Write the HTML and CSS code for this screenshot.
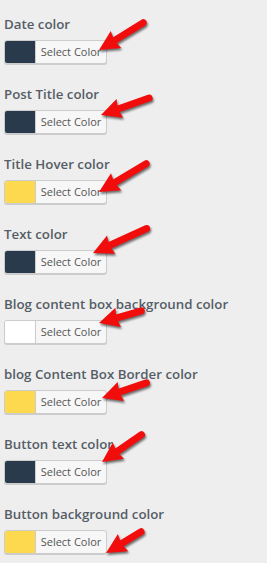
FILE: index.html
```html
<!DOCTYPE html>
<html lang="en">
<head>
    <meta charset="UTF-8">
    <meta name="viewport" content="width=device-width, initial-scale=1.0">
    <title>Colors</title>
    <link rel="stylesheet" href="styles.css">
</head>
<body>
    <ul class="settings">
        <li class="setting">
            <span class="label">Date color</span>
            <button class="picker"><span class="swatch dark"></span><span class="picker-text">Select Color</span></button>
            <svg class="arrow"><g transform="translate(95 50) rotate(-31.7)"><line x1="15" y1="0" x2="52" y2="0"/><polygon points="0,0 20,-10 18,0 20,10"/></g></svg>
        </li>
        <li class="setting">
            <span class="label">Post Title color</span>
            <button class="picker"><span class="swatch dark"></span><span class="picker-text">Select Color</span></button>
            <svg class="arrow"><g transform="translate(97 45) rotate(-19.4)"><line x1="15" y1="0" x2="51" y2="0"/><polygon points="0,0 20,-10 18,0 20,10"/></g></svg>
        </li>
        <li class="setting">
            <span class="label">Title Hover color</span>
            <button class="picker"><span class="swatch yellow"></span><span class="picker-text">Select Color</span></button>
            <svg class="arrow"><g transform="translate(95 52) rotate(-31)"><line x1="15" y1="0" x2="55" y2="0"/><polygon points="0,0 20,-10 18,0 20,10"/></g></svg>
        </li>
        <li class="setting">
            <span class="label">Text color</span>
            <button class="picker"><span class="swatch dark"></span><span class="picker-text">Select Color</span></button>
            <svg class="arrow"><g transform="translate(89 43) rotate(-24.5)"><line x1="15" y1="0" x2="59" y2="0"/><polygon points="0,0 20,-10 18,0 20,10"/></g></svg>
        </li>
        <li class="setting">
            <span class="label">Blog content box background color</span>
            <button class="picker"><span class="swatch white"></span><span class="picker-text">Select Color</span></button>
            <svg class="arrow"><g transform="translate(95 43) rotate(-16.1)"><line x1="15" y1="0" x2="44" y2="0"/><polygon points="0,0 20,-10 18,0 20,10"/></g></svg>
        </li>
        <li class="setting">
            <span class="label">blog Content Box Border color</span>
            <button class="picker"><span class="swatch yellow"></span><span class="picker-text">Select Color</span></button>
            <svg class="arrow"><g transform="translate(98 48) rotate(-18.8)"><line x1="15" y1="0" x2="47" y2="0"/><polygon points="0,0 20,-10 18,0 20,10"/></g></svg>
        </li>
        <li class="setting">
            <span class="label">Button text color</span>
            <button class="picker"><span class="swatch dark"></span><span class="picker-text">Select Color</span></button>
            <svg class="arrow"><g transform="translate(98 42) rotate(-34.6)"><line x1="15" y1="0" x2="48" y2="0"/><polygon points="0,0 20,-10 18,0 20,10"/></g></svg>
        </li>
        <li class="setting">
            <span class="label">Button background color</span>
            <button class="picker"><span class="swatch yellow"></span><span class="picker-text">Select Color</span></button>
            <svg class="arrow"><g transform="translate(102 63) rotate(-31.2)"><line x1="15" y1="0" x2="41" y2="0"/><polygon points="0,0 20,-10 18,0 20,10"/></g></svg>
        </li>
    </ul>
</body>
</html>
```

FILE: styles.css
```css
body {
    margin: 0;
    background: #eeeeee;
    font-family: "Open Sans", "Noto Sans", sans-serif;
    color: #555d66;
}

.settings {
    list-style: none;
    margin: 0;
    padding: 0 0 0 4px;
}

.setting {
    position: relative;
    height: 70px;
    box-sizing: border-box;
    padding-top: 14px;
}

.label {
    display: block;
    font-size: 13.3px;
    font-weight: 600;
    line-height: 20px;
    margin-bottom: 6px;
    white-space: nowrap;
}

.picker {
    display: flex;
    align-items: stretch;
    width: 103px;
    height: 24px;
    padding: 0;
    margin: 0;
    border: 1px solid #cccccc;
    border-radius: 3px;
    background: #f7f7f7;
    box-shadow: 0 1px 0 #cccccc;
    overflow: hidden;
    font-family: "Open Sans", "Noto Sans", sans-serif;
    cursor: pointer;
}

.swatch {
    width: 30px;
    border-right: 1px solid #cccccc;
}

.swatch.dark {
    background: #283a4b;
}

.swatch.yellow {
    background: #fdd94f;
}

.swatch.white {
    background: #ffffff;
}

.picker-text {
    flex: 1;
    font-size: 11px;
    line-height: 22px;
    color: #555555;
    text-align: center;
}

.arrow {
    position: absolute;
    left: 0;
    top: 0;
    width: 267px;
    height: 70px;
    overflow: visible;
    filter: drop-shadow(1px 2px 1px rgba(0, 0, 0, 0.55));
}

.arrow line {
    stroke: #f20d0d;
    stroke-width: 7;
    stroke-linecap: round;
}

.arrow polygon {
    fill: #f20d0d;
}
```
